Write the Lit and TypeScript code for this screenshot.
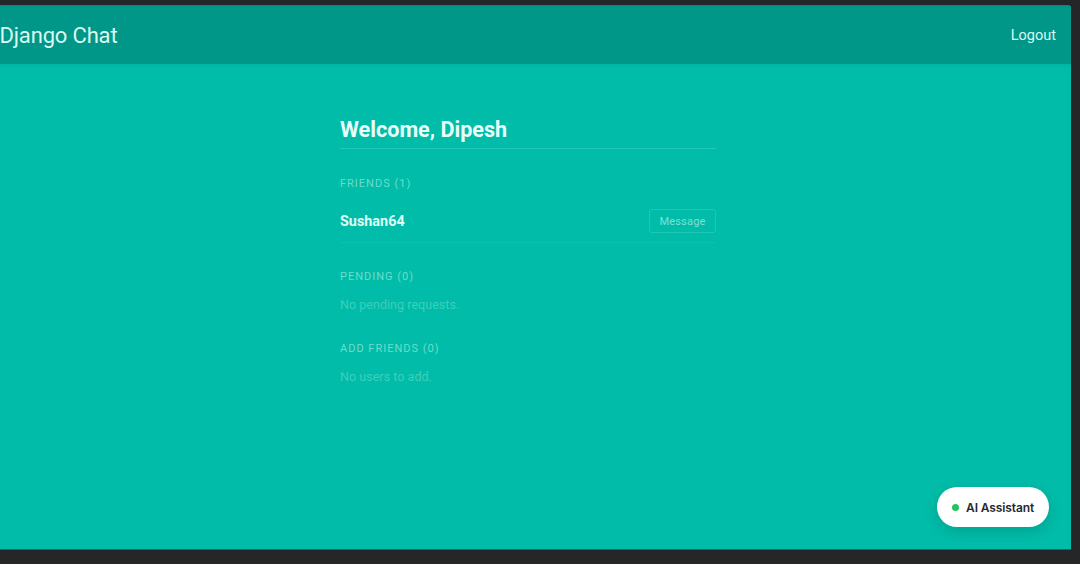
import { LitElement, html, css } from "lit";
import { customElement } from "lit/decorators.js";

@customElement("app-root")
export class AppRoot extends LitElement {
  static styles = css`
    :host {
      display: block;
      width: 1080px;
      height: 564px;
      box-sizing: border-box;
      padding: 5px 9px 14px 0;
      background: #252628;
      font-family: Roboto, "Noto Sans", sans-serif;
      overflow: hidden;
    }
    .screen {
      position: relative;
      height: 100%;
      background: #00bca8;
      display: flex;
      flex-direction: column;
      border-top: 1px solid #3e6f6a;
      border-bottom: 1px solid #14705f;
      box-sizing: border-box;
      border-top-right-radius: 3px;
    }
    .bar {
      height: 58px;
      flex: none;
      display: flex;
      align-items: center;
      justify-content: space-between;
      padding: 0 15px 0 0;
      background: #009688;
      box-shadow: 0 1px 3px rgba(0, 0, 0, 0.06);
    }
    .brand {
      font-size: 22px;
      color: #d8fbf4;
      letter-spacing: -0.17px;
      margin-left: -0.5px;
    }
    .logout {
      font-size: 14.5px;
      color: #d8fbf4;
    }
    .main {
      width: 376px;
      margin-left: 340px;
      padding-top: 51px;
    }
    h1 {
      margin: 0;
      font-size: 21.6px;
      line-height: 30px;
      font-weight: 700;
      color: #e8fffa;
      padding-bottom: 3px;
      border-bottom: 1px solid #1fc9b6;
    }
    .label {
      font-size: 11px;
      line-height: 14px;
      letter-spacing: 1px;
      color: #6cdccd;
    }
    .friends-label {
      margin-top: 28px;
    }
    .friend {
      display: flex;
      align-items: center;
      justify-content: space-between;
      margin-top: 18px;
      padding-bottom: 9px;
      border-bottom: 1px solid #0cc2ae;
    }
    .name {
      font-size: 14.4px;
      font-weight: 700;
      color: #e0fdf7;
    }
    .msg {
      width: 67px;
      height: 24px;
      box-sizing: border-box;
      display: flex;
      align-items: center;
      justify-content: center;
      font-size: 11px;
      letter-spacing: 0.2px;
      color: #7fe0d3;
      border: 1px solid #1fc8b5;
      border-radius: 3px;
    }
    .section {
      margin-top: 27px;
    }
    .empty {
      margin-top: 13px;
      font-size: 12.5px;
      line-height: 16px;
      letter-spacing: 0.04px;
      color: #3dcfbd;
    }
    .empty + .label {
      margin-top: 29px;
    }
    .fab {
      position: absolute;
      left: 937px;
      top: 481px;
      width: 112px;
      height: 40px;
      box-sizing: border-box;
      padding-left: 15px;
      display: flex;
      align-items: center;
      gap: 7px;
      background: #fff;
      border-radius: 20px;
      box-shadow: 0 4px 14px rgba(0, 0, 0, 0.14);
      font-family: Inter, Roboto, sans-serif;
      font-size: 12px;
      font-weight: 600;
      letter-spacing: -0.1px;
      color: #26282b;
      white-space: nowrap;
    }
    .dot {
      width: 7px;
      height: 7px;
      border-radius: 50%;
      background: #22c55e;
      flex: none;
    }
  `;

  render() {
    return html`
      <div class="screen">
        <header class="bar">
          <span class="brand">Django Chat</span>
          <span class="logout">Logout</span>
        </header>
        <main class="main">
          <h1>Welcome, Dipesh</h1>
          <div class="label friends-label">FRIENDS (1)</div>
          <div class="friend">
            <span class="name">Sushan64</span>
            <span class="msg">Message</span>
          </div>
          <div class="section">
            <div class="label">PENDING (0)</div>
            <div class="empty">No pending requests.</div>
            <div class="label">ADD FRIENDS (0)</div>
            <div class="empty">No users to add.</div>
          </div>
        </main>
        <div class="fab"><span class="dot"></span>AI Assistant</div>
      </div>
    `;
  }
}
